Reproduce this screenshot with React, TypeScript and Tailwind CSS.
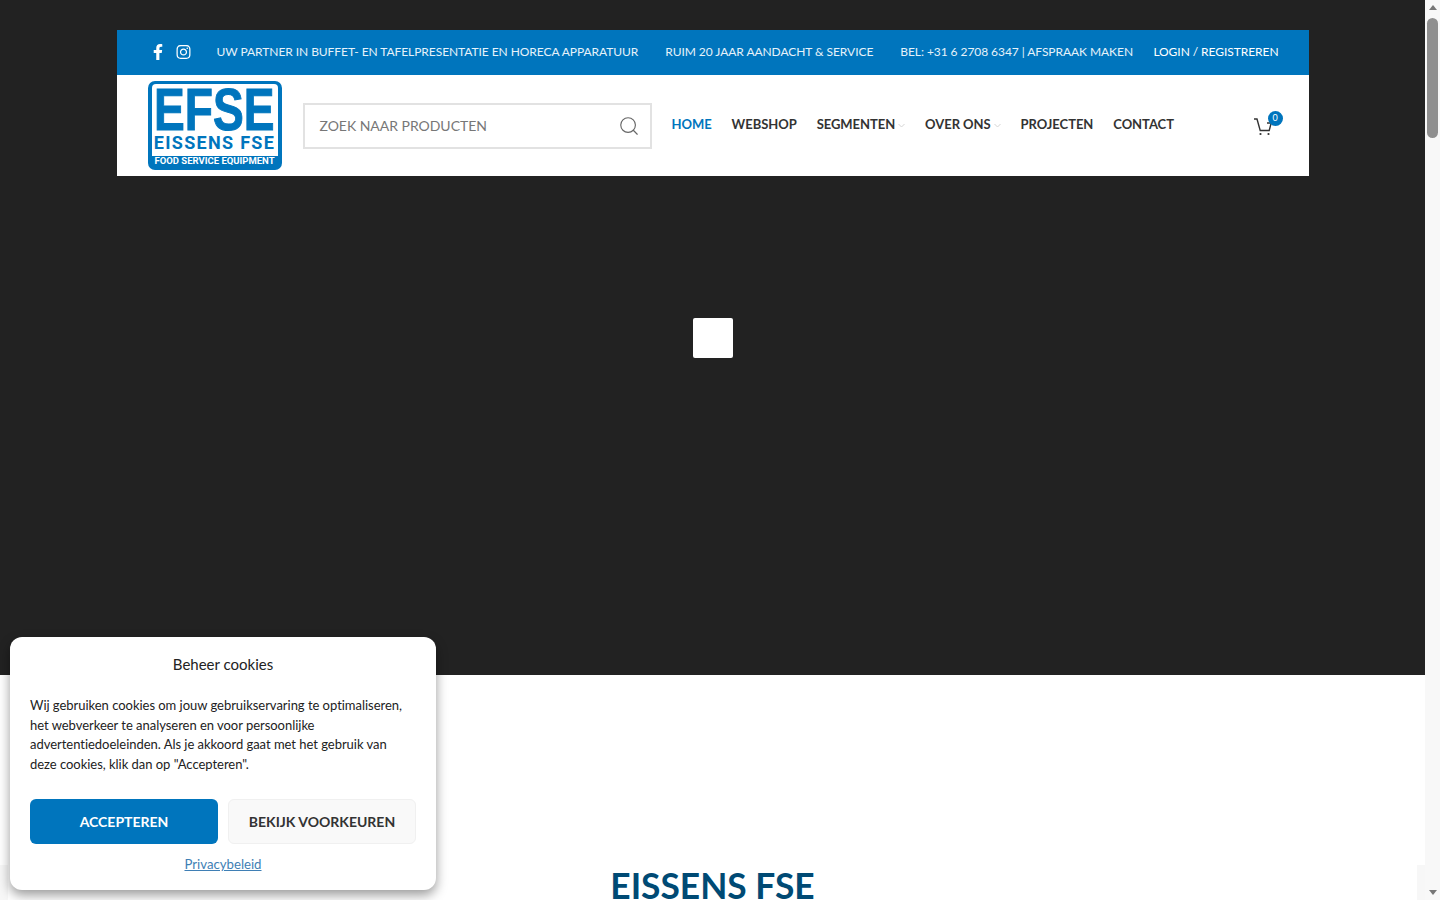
import { Search } from "lucide-react";
import { FaFacebookF, FaInstagram } from "react-icons/fa";

const FONT = "font-['Lato','Carlito','Open_Sans',sans-serif]";

const TOP_LINKS = [
  "UW PARTNER IN BUFFET- EN TAFELPRESENTATIE EN HORECA APPARATUUR",
  "RUIM 20 JAAR AANDACHT & SERVICE",
  "BEL: +31 6 2708 6347 | AFSPRAAK MAKEN",
];

const NAV = [
  { label: "HOME", active: true },
  { label: "WEBSHOP" },
  { label: "SEGMENTEN", caret: true },
  { label: "OVER ONS", caret: true },
  { label: "PROJECTEN" },
  { label: "CONTACT" },
];

function Logo() {
  return (
    <div className="flex h-[89px] w-[134px] shrink-0 flex-col items-center rounded-[7px] bg-[#0075bd] px-[4px] pt-[3px]">
      <div className="flex h-[72px] w-[126px] flex-col items-center rounded-t-[4px] bg-white pt-[4px]">
        <div className="flex h-[44px] items-center font-['Liberation_Sans',sans-serif] text-[60px] leading-[44px] font-bold whitespace-nowrap text-[#0075bd] [-webkit-text-stroke:1px_#0075bd] [transform:scaleX(0.77)]">
          EFSE
        </div>
        <div className="mt-[1px] font-['Roboto',sans-serif] text-[18px] leading-[20px] font-bold tracking-[1.3px] whitespace-nowrap text-[#0075bd]">
          EISSENS FSE
        </div>
      </div>
      <div className="flex h-[10px] items-center font-['Roboto',sans-serif] text-[9.5px] font-bold whitespace-nowrap text-white">
        FOOD SERVICE EQUIPMENT
      </div>
    </div>
  );
}

function CartIcon() {
  return (
    <svg width="20" height="20" viewBox="0 0 20 20" fill="none" stroke="#333" strokeWidth="1.4">
      <path d="M1 3h3l3.2 11.5h9l2-7.5H14" />
      <circle cx="7.5" cy="18" r="1.1" fill="#333" stroke="none" />
      <circle cx="15.5" cy="18" r="1.1" fill="#333" stroke="none" />
    </svg>
  );
}

function Caret() {
  return (
    <svg width="7" height="5" viewBox="0 0 7 5" fill="none" stroke="#d4d4d4" strokeWidth="1" className="ml-[3px]">
      <path d="M0.5 1l3 3 3-3" />
    </svg>
  );
}

function Header() {
  return (
    <header className="mx-auto w-[1192px]">
      <div className="flex h-[45px] items-center bg-[#0075bd] pr-[30px] pb-[2px] pl-[36px] text-[12px] tracking-[-0.06px] text-white">
        <div className="flex items-center gap-[13px]">
          <FaFacebookF className="h-[16px] w-[10px]" />
          <FaInstagram className="h-[16px] w-[15px]" />
        </div>
        <div className="ml-[26px] flex gap-[27px] text-[#e6f2fa]">
          {TOP_LINKS.map((t) => (
            <span key={t} className="whitespace-nowrap">{t}</span>
          ))}
        </div>
        <span className="ml-auto whitespace-nowrap">LOGIN / REGISTREREN</span>
      </div>
      <div className="flex h-[101px] items-center bg-white pr-[36px] pl-[31px]">
        <Logo />
        <div className="ml-[21px] flex h-[46px] w-[349px] items-center border-2 border-[#e2e2e2] pr-[10px] pl-[15px]">
          <span className="flex-1 text-[14px] tracking-[-0.03px] text-[#777]">ZOEK NAAR PRODUCTEN</span>
          <Search className="h-[22px] w-[22px] text-[#666]" strokeWidth={1.25} />
        </div>
        <nav className="-mt-[1px] ml-[20px] flex items-center gap-[20px]">
          {NAV.map((n) => (
            <a key={n.label} className={`flex items-center text-[13px] font-bold tracking-[-0.05px] whitespace-nowrap ${n.active ? "text-[#0075bd]" : "text-[#333]"}`}>
              {n.label}
              {n.caret && <Caret />}
            </a>
          ))}
        </nav>
        <div className="relative ml-auto">
          <CartIcon />
          <span className="absolute -top-[5px] -right-[10px] flex h-[15px] w-[15px] items-center justify-center rounded-full bg-[#0075bd] text-[9px] text-white">0</span>
        </div>
      </div>
    </header>
  );
}

function CookieBanner() {
  return (
    <div className="absolute top-[637px] left-[10px] flex h-[253px] w-[426px] flex-col rounded-[12px] bg-white px-[20px] text-[#222] shadow-[0_5px_12px_rgba(0,0,0,0.4)]">
      <div className="mt-[17px] text-center text-[15px] leading-[21px]">Beheer cookies</div>
      <p className="mt-[21px] text-[13px] leading-[19.6px] tracking-[-0.03px]">
        Wij gebruiken cookies om jouw gebruikservaring te optimaliseren, het webverkeer te analyseren en voor persoonlijke advertentiedoeleinden. Als je akkoord gaat met het gebruik van deze cookies, klik dan op "Accepteren".
      </p>
      <div className="mt-[25px] flex gap-[10px]">
        <button className="h-[45px] w-[188px] rounded-[6px] bg-[#0075bd] text-[14px] font-bold text-white">ACCEPTEREN</button>
        <button className="h-[45px] w-[188px] rounded-[6px] border border-[#f0f0f0] bg-[#f9f9f9] text-[14px] font-bold text-[#333]">BEKIJK VOORKEUREN</button>
      </div>
      <a className="mt-[11px] text-center text-[13.2px] leading-[19px] text-[#3f7fb5] underline">Privacybeleid</a>
    </div>
  );
}

function Scrollbar() {
  return (
    <div className="flex h-screen w-[15px] shrink-0 flex-col items-center bg-[#f8f8f8]">
      <div className="flex h-[15px] items-center justify-center">
        <div className="h-0 w-0 border-x-[4px] border-b-[5px] border-x-transparent border-b-[#777]" />
      </div>
      <div className="mt-[3px] h-[120px] w-[11px] rounded-full bg-[#8f8f8f]" />
      <div className="mt-auto flex h-[15px] items-center justify-center">
        <div className="h-0 w-0 border-x-[4px] border-t-[5px] border-x-transparent border-t-[#777]" />
      </div>
    </div>
  );
}

export default function App() {
  return (
    <div className={`${FONT} relative flex h-screen overflow-hidden bg-white`}>
      <main className="min-w-0 flex-1">
        <section className="h-[675px] bg-[#222] pt-[30px]">
          <Header />
          <div className="mt-[142px] flex justify-center">
            <div className="h-[40px] w-[40px] rounded-[2px] bg-white" />
          </div>
        </section>
        <div className="h-[190px] bg-white" />
        <section className="h-[60px] bg-[#f7f7f7] px-[8px]">
          <div className="h-full bg-white pt-[1px] text-center text-[35.3px] leading-[40px] font-bold text-[#004a74]">
            EISSENS FSE
          </div>
        </section>
      </main>
      <Scrollbar />
      <CookieBanner />
    </div>
  );
}
